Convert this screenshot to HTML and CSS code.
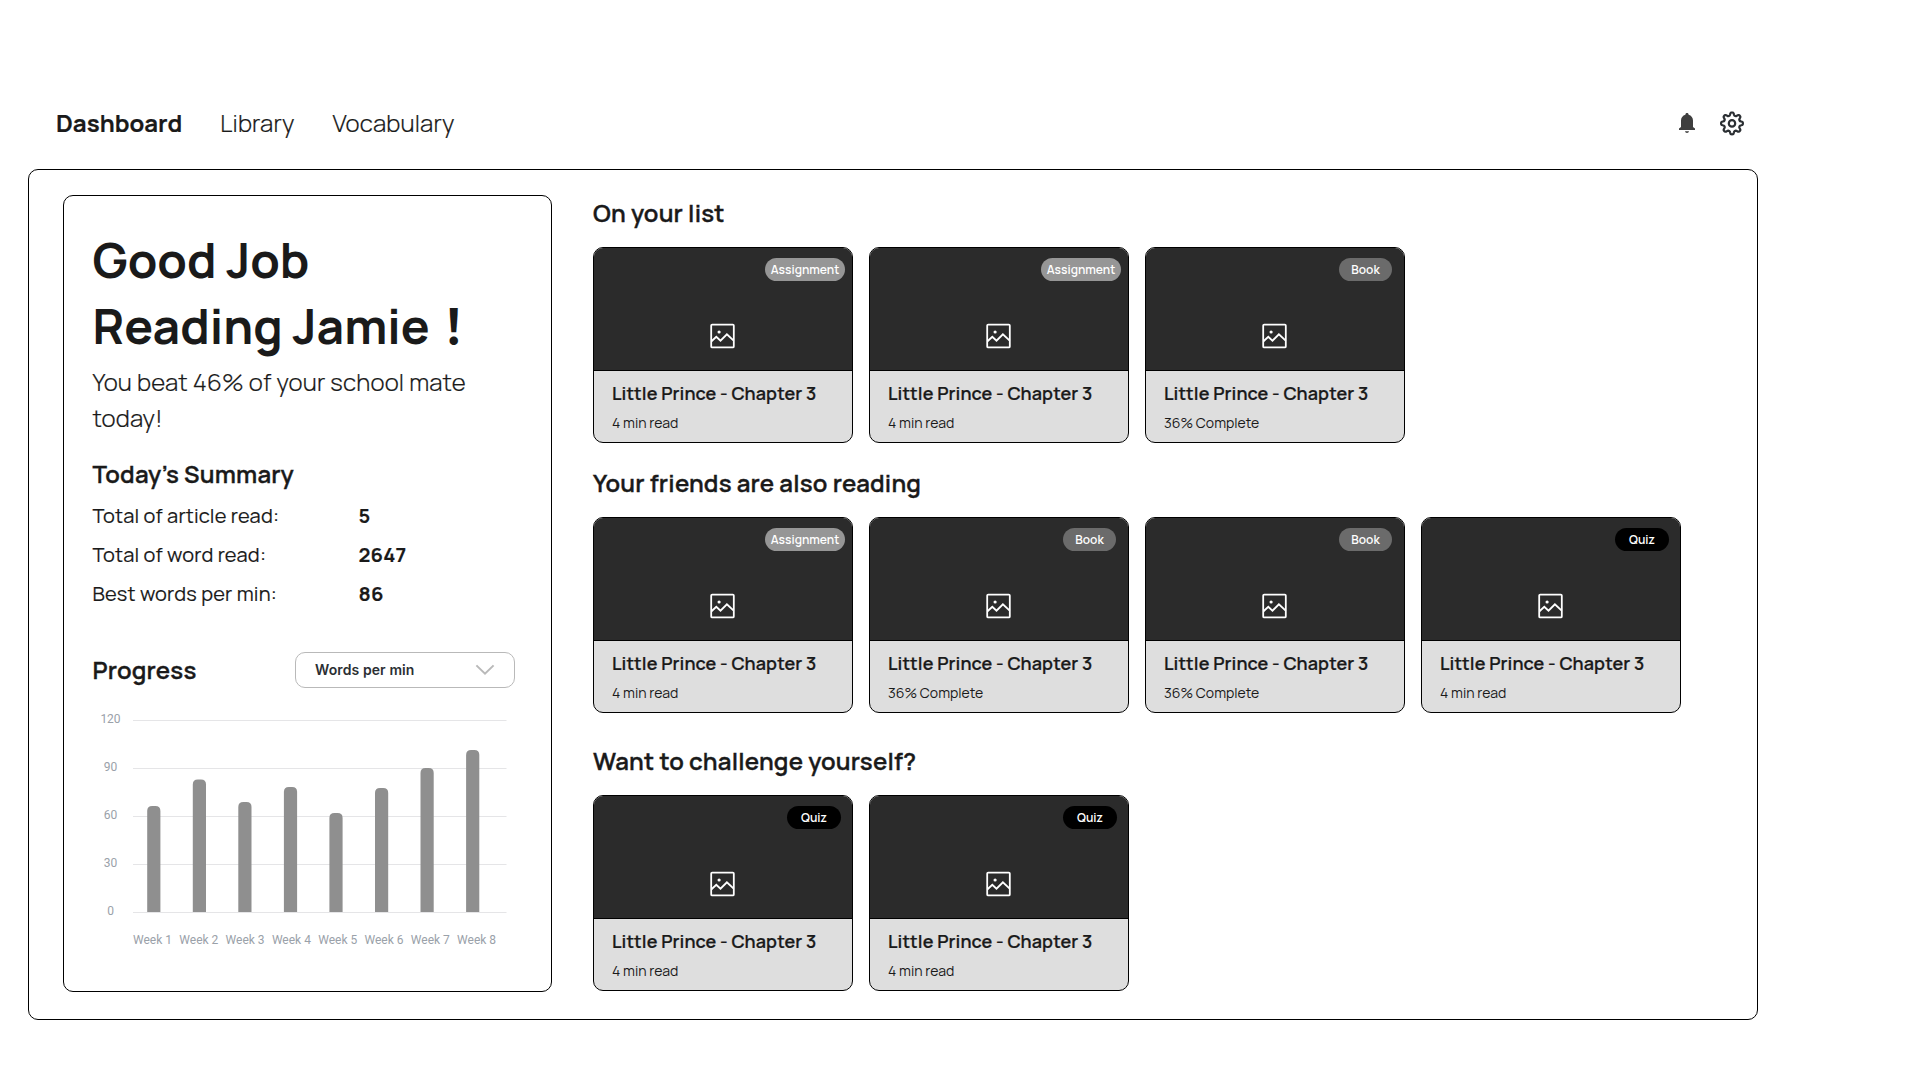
FILE: index.html
```html
<!DOCTYPE html>
<html lang="en">
<head>
<meta charset="utf-8">
<title>Reading dashboard</title>
<link rel="stylesheet" href="styles.css">
</head>
<body>
<svg width="0" height="0" class="sprite" aria-hidden="true">
  <symbol id="picture" viewBox="0 0 26 26">
    <rect x="1.200" y="1.600" width="22.600" height="22.800" rx="1" fill="none" stroke="#fff" stroke-width="1.800"/>
    <circle cx="9.100" cy="9" r="1.600" fill="#fff"/>
    <path d="M1.500 18.200 6.300 13.900 10.500 17.700 16.900 11.400 23.700 17.600" fill="none" stroke="#fff" stroke-width="1.900"/>
  </symbol>
</svg>

<header class="topbar">
  <nav class="nav">
    <a class="nav-item nav-item-active">Dashboard</a>
    <a class="nav-item">Library</a>
    <a class="nav-item">Vocabulary</a>
  </nav>
  <div class="actions">
    <svg width="16" height="20" viewBox="0 0 16 20" fill="#3f3f3f"><path d="M8 0C9 0 9.600.7 9.600 1.700 12.400 2.500 14 4.700 14 7.500V14L16 15.600V17H0V15.600L2 14V7.500C2 4.700 3.600 2.500 6.400 1.700 6.400.7 7 0 8 0ZM6 18.200H10C9.800 19.300 9 19.900 8 19.900S6.200 19.300 6 18.200Z"/></svg>
    <svg width="26" height="26" viewBox="0 0 26 26" fill="none" stroke="#2b2f33" stroke-width="2.200" stroke-linejoin="round"><circle cx="13" cy="13.400" r="3.200"/><path id="gear" d=""/></svg>
  </div>
</header>

<main class="board">
  <aside class="panel">
    <h1 class="headline">Good Job<br>Reading Jamie<span class="bang" lang="ja">！</span></h1>
    <p class="lead">You beat 46% of your school mate today!</p>
    <h2 class="title summary-title">Today’s Summary</h2>
    <dl class="stats">
      <dt>Total of article read:</dt><dd>5</dd>
      <dt>Total of word read:</dt><dd>2647</dd>
      <dt>Best words per min:</dt><dd>86</dd>
    </dl>
    <div class="progress-head">
      <h2 class="title">Progress</h2>
      <div class="select">
        <span>Words per min</span>
        <svg width="20" height="12" viewBox="0 0 20 12" fill="none" stroke="#b9b9b9" stroke-width="2"><path d="M1.400 1.400 10 9.600 18.600 1.400"/></svg>
      </div>
    </div>
    <svg class="chart" width="424" height="250" viewBox="0 0 424 250">
      <g class="grid">
        <path d="M41 20.500H414.500M41 68.500H414.500M41 116.500H414.500M41 164.500H414.500M41 212.500H414.500"/>
      </g>
      <g class="axis-y">
        <text x="18.500" y="22.700">120</text>
        <text x="18.500" y="70.700">90</text>
        <text x="18.500" y="118.700">60</text>
        <text x="18.500" y="166.700">30</text>
        <text x="18.500" y="214.700">0</text>
      </g>
      <g class="bars">
        <path d="M55.200 212V111q0-5 5-5h3.200q5 0 5 5V212z"/>
        <path d="M100.800 212V84.500q0-5 5-5h3.200q5 0 5 5V212z"/>
        <path d="M146.300 212V107q0-5 5-5h3.200q5 0 5 5V212z"/>
        <path d="M191.900 212V92q0-5 5-5h3.200q5 0 5 5V212z"/>
        <path d="M237.400 212V118q0-5 5-5h3.200q5 0 5 5V212z"/>
        <path d="M283 212V93q0-5 5-5h3.200q5 0 5 5V212z"/>
        <path d="M328.500 212V73q0-5 5-5h3.200q5 0 5 5V212z"/>
        <path d="M374.100 212V55q0-5 5-5h3.200q5 0 5 5V212z"/>
      </g>
      <g class="axis-x">
        <text x="41" y="244.300">Week 1</text>
        <text x="87.300" y="244.300">Week 2</text>
        <text x="133.600" y="244.300">Week 3</text>
        <text x="179.900" y="244.300">Week 4</text>
        <text x="226.200" y="244.300">Week 5</text>
        <text x="272.500" y="244.300">Week 6</text>
        <text x="318.800" y="244.300">Week 7</text>
        <text x="365.100" y="244.300">Week 8</text>
      </g>
    </svg>
  </aside>

  <div class="shelves">
    <section class="shelf">
      <h2 class="title">On your list</h2>
      <div class="cards">
        <article class="card"><div class="cover"><span class="badge assignment">Assignment</span><svg class="picture"><use href="#picture"/></svg></div><h3>Little Prince - Chapter 3</h3><p>4 min read</p></article>
        <article class="card"><div class="cover"><span class="badge assignment">Assignment</span><svg class="picture"><use href="#picture"/></svg></div><h3>Little Prince - Chapter 3</h3><p>4 min read</p></article>
        <article class="card"><div class="cover"><span class="badge book">Book</span><svg class="picture"><use href="#picture"/></svg></div><h3>Little Prince - Chapter 3</h3><p>36% Complete</p></article>
      </div>
    </section>
    <section class="shelf">
      <h2 class="title">Your friends are also reading</h2>
      <div class="cards">
        <article class="card"><div class="cover"><span class="badge assignment">Assignment</span><svg class="picture"><use href="#picture"/></svg></div><h3>Little Prince - Chapter 3</h3><p>4 min read</p></article>
        <article class="card"><div class="cover"><span class="badge book">Book</span><svg class="picture"><use href="#picture"/></svg></div><h3>Little Prince - Chapter 3</h3><p>36% Complete</p></article>
        <article class="card"><div class="cover"><span class="badge book">Book</span><svg class="picture"><use href="#picture"/></svg></div><h3>Little Prince - Chapter 3</h3><p>36% Complete</p></article>
        <article class="card"><div class="cover"><span class="badge quiz">Quiz</span><svg class="picture"><use href="#picture"/></svg></div><h3>Little Prince - Chapter 3</h3><p>4 min read</p></article>
      </div>
    </section>
    <section class="shelf shelf-last">
      <h2 class="title">Want to challenge yourself?</h2>
      <div class="cards">
        <article class="card"><div class="cover"><span class="badge quiz">Quiz</span><svg class="picture"><use href="#picture"/></svg></div><h3>Little Prince - Chapter 3</h3><p>4 min read</p></article>
        <article class="card"><div class="cover"><span class="badge quiz">Quiz</span><svg class="picture"><use href="#picture"/></svg></div><h3>Little Prince - Chapter 3</h3><p>4 min read</p></article>
      </div>
    </section>
  </div>
</main>
<script src="gear.js"></script>
</body>
</html>
```
FILE: styles.css
```css
* { box-sizing: border-box; margin: 0; padding: 0; }

body {
  background: #fff;
  color: #1a1a1a;
  font-family: Manrope, Inter, sans-serif;
  letter-spacing: 0.19px;
}

.sprite { display: block; }

.topbar {
  display: flex;
  justify-content: space-between;
  width: 1758px;
  padding: 107px 13px 30px 56px;
}

.nav { display: flex; gap: 38px; }
.nav-item { font-size: 24px; font-weight: 300; line-height: 32px; -webkit-text-stroke: 0.2px; }
.nav-item-active { font-weight: 700; letter-spacing: 0; }

.actions { display: flex; align-items: center; gap: 24px; height: 32px; }

.board {
  display: flex;
  gap: 41px;
  width: 1730px;
  height: 851px;
  margin-left: 28px;
  padding: 25px 0 0 34px;
  border: 1px solid #000;
  border-radius: 10px;
}

.panel {
  width: 489px;
  height: 797px;
  padding: 31px 36px 0 28.500px;
  border: 1px solid #000;
  border-radius: 10px;
}

.headline {
  font-size: 48px;
  font-weight: 700;
  line-height: 65.6px;
  letter-spacing: 0;
}
.bang { font-family: "Noto Sans CJK JP", sans-serif; font-weight: 700; line-height: 1; }

.lead { margin-top: 6px; padding-bottom: 1px; font-size: 24px; font-weight: 300; line-height: 36px; letter-spacing: 0.17px; -webkit-text-stroke: 0.2px; }

.title { font-size: 24px; font-weight: 600; line-height: 32px; letter-spacing: 0.2px; -webkit-text-stroke: 0.35px; }
.summary-title { margin-top: 21px; }

.stats {
  display: grid;
  grid-template-columns: 266px 1fr;
  grid-auto-rows: 39.200px;
  margin-top: 5.600px;
  font-size: 20px;
  line-height: 39.200px;
  -webkit-text-stroke: 0.15px;
}
.stats dd { font-weight: 700; }

.progress-head {
  display: flex;
  justify-content: space-between;
  align-items: center;
  height: 36px;
  margin-top: 38.800px;
}
.select {
  display: flex;
  justify-content: space-between;
  align-items: center;
  width: 220px;
  height: 36px;
  padding: 0 19px 0 19px;
  border: 1px solid #b9b9b9;
  border-radius: 10px;
  color: #2b2f33;
  font: 600 14px/20px Inter, sans-serif;
  letter-spacing: 0.1px;
}

.chart { display: block; margin: 12px 0 0 -0.500px; font: 12px Roboto, sans-serif; letter-spacing: 0; }
.grid { stroke: #e5e5e7; }
.bars { fill: #8f8f8f; }
.axis-y { fill: #9aa1a9; text-anchor: middle; }
.axis-x { fill: #9aa1a9; }

.shelves { padding-top: 2px; }
.shelf { margin-bottom: 24px; }
.shelf-last { margin-top: 32px; }
.cards { display: flex; gap: 16px; margin-top: 18px; }

.card {
  width: 260px;
  height: 196px;
  border: 1px solid #000;
  border-radius: 10px;
  background: #dedede;
  overflow: hidden;
}
.cover {
  position: relative;
  height: 123px;
  border-bottom: 1px solid #000;
  background: #2b2b2b;
}
.picture { display: block; width: 26px; height: 26px; margin: 0 auto; transform: translateY(75px); }
.badge {
  position: absolute;
  top: 10px;
  height: 22.500px;
  border-radius: 12px;
  color: #fff;
  font-size: 12px;
  font-weight: 600;
  line-height: 23px;
  letter-spacing: 0;
  text-align: center;
}
.assignment { right: 7px; width: 80px; background: #969696; }
.book { right: 12px; width: 53px; background: #6b6b6b; }
.quiz { right: 11px; width: 54px; background: #000; }
.card h3 { margin: 9px 0 0 18px; font-size: 18px; font-weight: 600; line-height: 26px; letter-spacing: 0.09px; -webkit-text-stroke: 0.2px; }
.card p { margin: 7px 0 0 18px; font-size: 14px; font-weight: 400; line-height: 20px; letter-spacing: 0; }
```
FILE: gear.js
```js
// Builds the eight-toothed outline of the settings icon.
let d = '';
for (let i = 0; i <= 160; i++) {
  const a = i / 160 * Math.PI * 2;
  const r = 9.5 + 1.5 * Math.tanh(1.7 * Math.cos(8 * a));
  d += (i ? 'L' : 'M') + (13 + r * Math.sin(a)).toFixed(2) + ' ' + (13.4 - r * Math.cos(a)).toFixed(2);
}
document.getElementById('gear').setAttribute('d', d + 'Z');
```
